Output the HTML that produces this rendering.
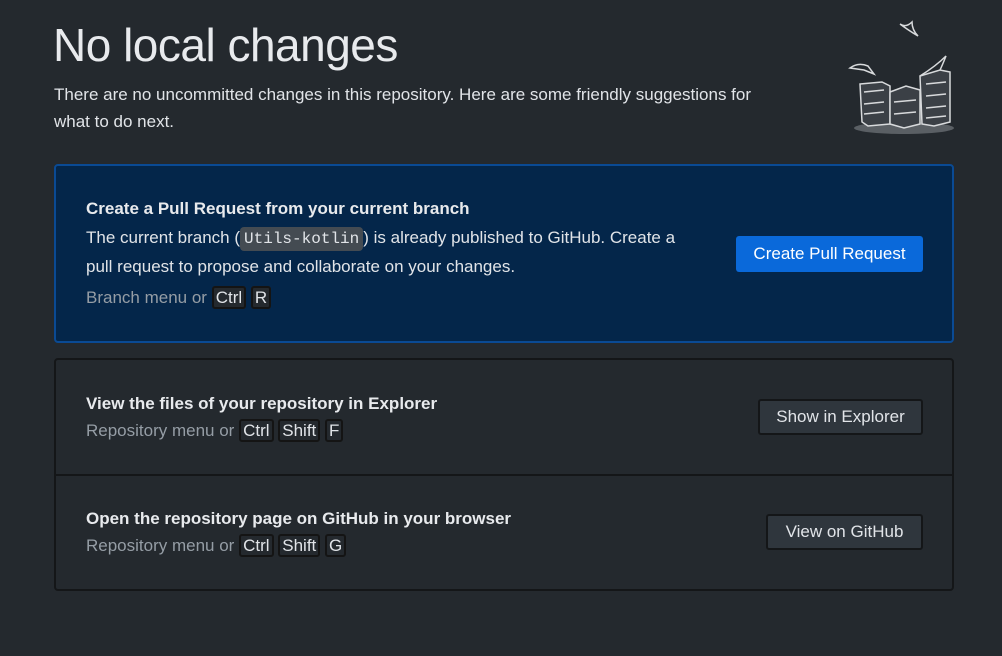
<!DOCTYPE html>
<html><head><style>
*{box-sizing:border-box;margin:0;padding:0}
body{width:1002px;height:656px;background:#24292e;font-family:"Liberation Sans",sans-serif;color:#e1e4e8;position:relative;overflow:hidden}
.a{position:absolute}
h1{position:absolute;left:53px;top:18px;font-size:46px;font-weight:300;color:#e8eaed;letter-spacing:-0.5px}
.sub{left:54px;top:81px;font-size:17px;line-height:27px;width:735px;color:#e1e4e8}
.card{position:absolute;left:54px;width:900px;border-radius:4px}
.blue{top:164px;height:179px;background:#04264a;border:2px solid #0a4a94}
.grey{top:358px;height:233px;border:2px solid #141618;background:#24292e}
.div{position:absolute;left:54px;width:900px;top:474px;height:2px;background:#141618}
.t{font-size:17px;font-weight:bold;color:#e8eaed}
.l{font-size:17px;color:#e1e4e8}
.m{font-size:17px;color:#959da5}
kbd{font-family:"Liberation Sans",sans-serif;font-size:17px;color:#e1e4e8;border:2px solid #141414;border-radius:3px;padding:0 2px;background:#24292e}
.blue kbd{background:#04264a}
code{font-family:"Liberation Mono",monospace;font-size:16px;background:#444b52;border-radius:4px;padding:3px 4px;color:#e1e4e8}
.btn{position:absolute;height:36px;font-size:17px;display:flex;align-items:center;justify-content:center;border-radius:3px}
.pri{background:#0a69da;color:#fff}
.sec{background:#2f363d;border:2px solid #141618;color:#e1e4e8}
</style></head><body>
<h1>No local changes</h1>
<div class="a sub">There are no uncommitted changes in this repository. Here are some friendly suggestions for what to do next.</div>
<svg class="a" style="left:846px;top:18px" width="112" height="118" viewBox="0 0 112 118" fill="none" stroke="#d8dadc" stroke-width="1.5">
<ellipse cx="58" cy="110" rx="50" ry="6" fill="#5a5f64" stroke="none"/>
<path d="M54 6 Q62 12 72 18 Q66 12 66 4 Q60 10 54 6Z"/>
<path d="M4 50 Q12 44 22 48 L28 56 L18 52 Z"/>
<path d="M14 66 L36 64 L44 68 L44 106 L22 108 L16 104Z" fill="#3b4046"/>
<path d="M44 74 L60 68 L74 72 L74 106 L58 110 L44 106Z" fill="#3b4046"/>
<path d="M74 58 L94 52 L104 54 L104 104 L88 108 L76 106Z" fill="#3b4046"/>
<path d="M74 58 Q90 48 100 38 Q96 48 94 52"/>
<path d="M18 74 L38 72 M18 86 L38 84 M18 96 L38 94 M48 84 L70 82 M48 96 L70 94 M80 66 L100 64 M80 78 L100 76 M80 90 L100 88 M80 100 L100 98"/>
</svg>
<div class="card blue"></div>
<div class="a t" style="left:86px;top:199px">Create a Pull Request from your current branch</div>
<div class="a l" style="left:86px;top:224px;width:620px;line-height:28px">The current branch (<code>Utils-kotlin</code>) is already published to GitHub. Create a pull request to propose and collaborate on your changes.</div>
<div class="a m" style="left:86px;top:288px">Branch menu or <kbd>Ctrl</kbd> <kbd>R</kbd></div>
<div class="btn pri" style="left:736px;top:236px;width:187px">Create Pull Request</div>
<div class="card grey"></div>
<div class="div"></div>
<div class="a t" style="left:86px;top:394px">View the files of your repository in Explorer</div>
<div class="a m" style="left:86px;top:421px">Repository menu or <kbd>Ctrl</kbd> <kbd>Shift</kbd> <kbd>F</kbd></div>
<div class="btn sec" style="left:758px;top:399px;width:165px">Show in Explorer</div>
<div class="a t" style="left:86px;top:509px">Open the repository page on GitHub in your browser</div>
<div class="a m" style="left:86px;top:536px">Repository menu or <kbd>Ctrl</kbd> <kbd>Shift</kbd> <kbd>G</kbd></div>
<div class="btn sec" style="left:766px;top:514px;width:157px">View on GitHub</div>
</body></html>
